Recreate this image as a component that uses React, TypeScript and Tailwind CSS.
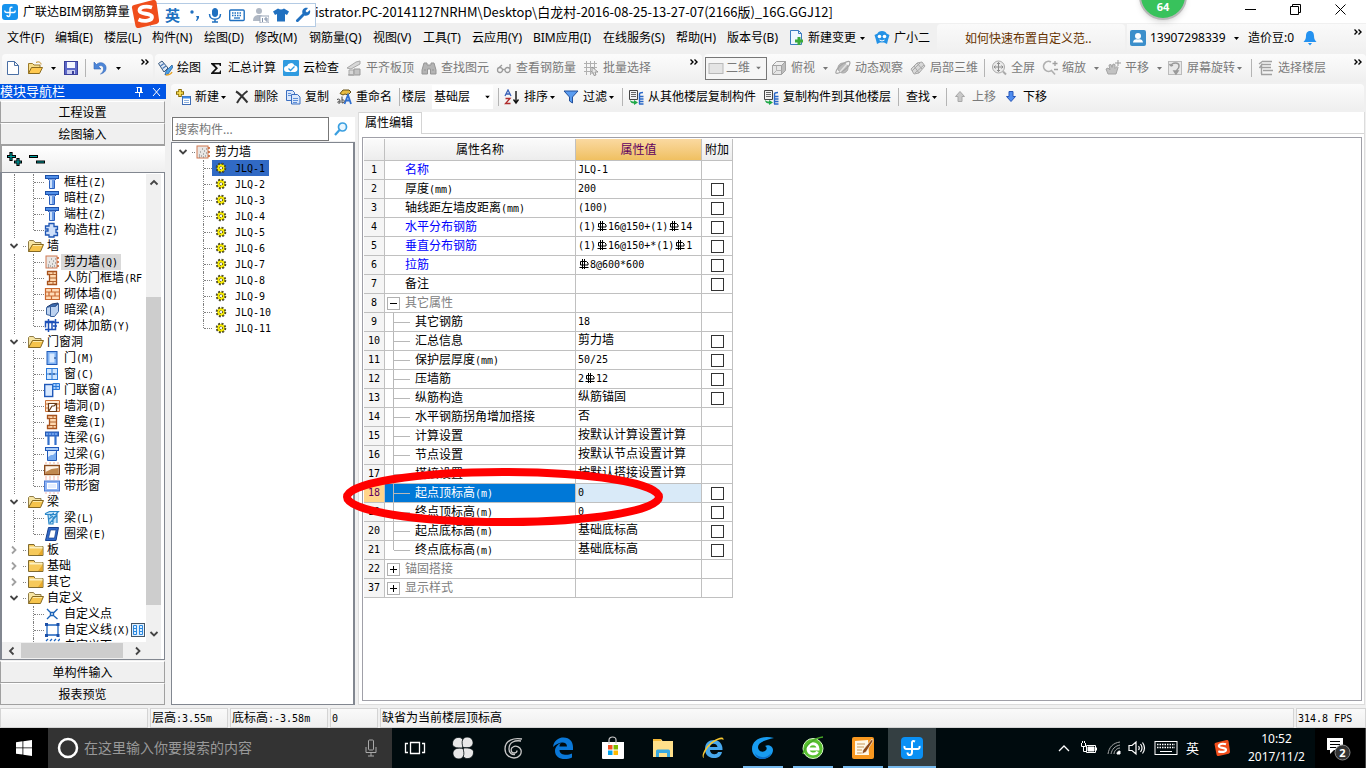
import { Fragment } from 'react'
import type { ReactNode } from 'react'
import clsx from 'clsx'

// ─── icons ──────────────────────────────────────────────────────────────────

const PILLAR = (
  <>
    <rect x="1.5" y="1.5" width="13" height="3" fill="#4f8fe8" stroke="#1c4fa8" />
    <path d="M4 5h8l-1.500 1.500V14.500h-5V6.500z" fill="#cfe2fb" stroke="#2a5fbd" />
    <path d="M9 6v8" stroke="#6a9be6" strokeWidth="2" />
  </>
)
const NICHE = (
  <>
    <path d="M3.500 1.500h9v13h-9v-3h2v-7h-2z" fill="#ffd9b0" stroke="#a8521c" strokeWidth="1.300" />
    <path d="M6 4.500h6M6 8h6M6 11.500h6M9 1.500v3M9 11.500v3" stroke="#b0622c" />
  </>
)
const CONCRETE = (
  <>
    <rect x="2" y="2" width="11" height="12" fill="#e9e6e4" stroke="#d07850" />
    <path d="M13 4h2M13 8h2M13 12h2" stroke="#c05a28" strokeWidth="1.500" />
    <path d="M4 11h1M6 12h1M8 10h1M10 12h1M5 8h1M9 7h1M7 5h1M11 9h1M4 13h1M8 13h1M11 5h1" stroke="#777" />
  </>
)

const ICONS: Record<string, ReactNode> = {
  page: <path d="M2.500 1.500h7l4 4v9h-11zM9.500 1.500v4h4" fill="#fff" stroke="#4a6fa5" />,
  open: (
    <>
      <path d="M1.500 13.500v-10h4l1.500 1.500h6v3" fill="#f7dd8a" stroke="#9c7a28" />
      <path d="M1.500 13.500l3-6h11l-3 6z" fill="#ffc94f" stroke="#8a6a1e" />
      <path d="M9 2.500c3-1.500 5 0 5 2" fill="none" stroke="#c08a20" />
    </>
  ),
  save: (
    <>
      <rect x="1.500" y="1.500" width="13" height="13" fill="#5c68c8" stroke="#3a3f9a" />
      <rect x="4" y="2" width="8" height="6" fill="#f4f6ff" />
      <rect x="4" y="10" width="8" height="4" fill="#c9cdf0" />
      <rect x="9" y="11" width="2" height="3" fill="#3a3f9a" />
    </>
  ),
  undo: (
    <path d="M2 2v7h7L6.500 6.500C9 4.500 12 6 11.500 9.500c-.2 2-1.500 3.500-3 4.500 4-1 6-3.500 5.500-7C13.500 3 8 1 4.500 4.500z" fill="#4d86d8" stroke="#2f64b8" strokeWidth=".6" />
  ),
  paint: (
    <>
      <path d="M1.500 3.500L5 1l6 7-4 4z" fill="#dfe9f5" stroke="#38587e" />
      <path d="M3.500 6L7 3.500M5.500 8.500L9 6" stroke="#4a7ab8" strokeWidth="1.300" />
      <path d="M15 5l-6 6-1 4 3-1 5-7z" fill="#4aa0e8" stroke="#1c5590" strokeWidth=".7" />
      <path d="M9 15c2 0 5-1 6-3" stroke="#e8a020" strokeWidth="1.500" fill="none" />
    </>
  ),
  sigma: <path d="M3 3h10v3h-1.200l-.6-1.400H6.500L10 8.200 6 12.200h5.400l.7-1.700H13V14H3v-1l4.500-4.800L3 4z" fill="#111" />,
  cloud: (
    <>
      <rect width="16" height="16" rx="1" fill="#2f9be0" />
      <path d="M4 12a3 3 0 010-6 4 4 0 017.500-.5A3.300 3.300 0 0112 12z" fill="#fff" />
      <path d="M5.500 8.500l2 2 4-4" fill="none" stroke="#2f9be0" strokeWidth="1.300" />
    </>
  ),
  align: (
    <>
      <path d="M1 8l9-6 4-1v3l-9 5zM3 10h5v5H3z" fill="#d8d8d8" stroke="#a8a8a8" />
      <path d="M8 14V9h6v6H2" fill="#c4c4c4" stroke="#999" />
    </>
  ),
  binoculars: (
    <path d="M3 3h3v2h4V3h3l2 7v4H9.500V9h-3v5H1v-4zM3 10h2M11 10h2" fill="#b4b4b4" stroke="#959595" />
  ),
  glasses: (
    <path d="M1.500 10a2.500 2.500 0 105 0 2.500 2.500 0 10-5 0zM9 10a2.500 2.500 0 105 0 2.500 2.500 0 10-5 0zM6.500 9.500H9M2 8.500L6 5M14 9V4" fill="none" stroke="#9a9a9a" strokeWidth="1.300" />
  ),
  batch: (
    <>
      <path d="M1 3.500h13M1 7.500h13M1 11.500h8M3.500 1v14M7.500 1v14M11.500 1v8" stroke="#b0b0b0" fill="none" />
      <path d="M9 7l6 5h-3l1 3-2 .5-1-3-1 1z" fill="#e8e8e8" stroke="#888" strokeWidth=".8" />
    </>
  ),
  plane: <rect x="1" y="3.500" width="14" height="10" fill="#e4e4e4" stroke="#b8b8b8" />,
  cube: (
    <>
      <path d="M1.500 5.500l4-4h9l-4 4z" fill="#efefef" stroke="#a2a2a2" />
      <path d="M10.500 5.500l4-4v9l-4 4z" fill="#bdbdbd" stroke="#a2a2a2" />
      <path d="M1.500 5.500h9v9h-9z" fill="#e6e6e6" stroke="#a2a2a2" />
      <path d="M5.500 5.500v5h5M5.500 10.500l-4 4" stroke="#b4b4b4" />
    </>
  ),
  orbit: (
    <>
      <circle cx="8" cy="8" r="5" fill="#bcbcbc" stroke="#a8a8a8" />
      <path d="M1 13c-1-2 3-7 8-10 4-2.400 6-2 6 0 0 3-5 7-9 9-2.500 1.200-4.400 1.600-5 1z" fill="none" stroke="#a4a4a4" strokeWidth="1.200" />
      <path d="M5 12l7-8" stroke="#e2e2e2" strokeWidth="1.500" />
    </>
  ),
  local3d: (
    <path d="M1 9l6-6 5-1 3 4-6 7-5 1zM4 6l5 7M7 3l5 6M2 11l8-8M5 13l9-8" fill="#d8d8d8" stroke="#a8a8a8" />
  ),
  full: (
    <>
      <circle cx="7.500" cy="7" r="6" fill="#eaeaea" stroke="#aaa" />
      <path d="M7.500 2.500v9M3 7h9M6 4l1.500-1.500L9 4M6 10l1.500 1.500L9 10M4.500 5.500L3 7l1.500 1.500M10.500 5.500L12 7l-1.500 1.500" fill="none" stroke="#8c8c8c" />
      <path d="M12 11.500l3 3" stroke="#aaa" strokeWidth="2" />
    </>
  ),
  zoom: (
    <>
      <path d="M9 2a5 5 0 101 8M9 10l4 4.500" fill="none" stroke="#b0b0b0" strokeWidth="1.700" />
      <path d="M13 1v5M10.500 3.500h5M12 9.500h4" stroke="#a0a0a0" strokeWidth="1.300" />
    </>
  ),
  hand: (
    <>
      <path d="M3 14l-2-5 2-1 2 2-1-5 2-.5 1 3 1-3.500 2 .5v4l2-2 1 1-2 6.500z" fill="#c2c2c2" stroke="#a4a4a4" />
      <path d="M13 0v6M10 3h6" stroke="#999" />
    </>
  ),
  rotate: (
    <>
      <rect x="1.500" y="1.500" width="13" height="13" fill="#e8e8e8" stroke="#bbb" />
      <path d="M4 6c1-4 8-4 8 0 0 4-3 3-3 6M9 14l-2-3h4zM4 6l-1.500-2M4 6l2-1" fill="none" stroke="#999" strokeWidth="1.500" />
    </>
  ),
  floors: (
    <path d="M1 4l4-3M5 1.500h9M3 4.500h10M3 7.500h10M5 10.500h10M3 14.500h11M1.500 8l2-3v9" fill="none" stroke="#a0a0a0" strokeWidth="1.400" />
  ),
  create: (
    <>
      <path d="M5 0v8M1 4h8" stroke="#8a6d00" strokeWidth="3.500" />
      <path d="M5 1v6M2 4h6" stroke="#ffe45a" strokeWidth="1.700" />
      <rect x="7.500" y="7.500" width="8" height="8" fill="#fff" stroke="#3f6db5" />
      <path d="M8 8.500h7" stroke="#3f8be8" strokeWidth="2" />
      <path d="M9 11.500h5M9 13.500h5" stroke="#8db0dd" />
    </>
  ),
  remove: <path d="M2 2.500c4 2 8 7 11.500 11M13.500 2C9 5 6 9 3 14" stroke="#333" strokeWidth="2" fill="none" />,
  copy: (
    <>
      <path d="M1.500 1.500h6l2 2v8h-8z" fill="#dbe8fb" stroke="#3b6fc0" />
      <path d="M6.500 5.500h6l2.500 2.500v7h-8.500z" fill="#dbe8fb" stroke="#3b6fc0" />
      <path d="M8 9.500h5M8 11.500h5M8 13.500h4M3 4.500h3M3 6.500h3" stroke="#5e8fd8" />
    </>
  ),
  rename: (
    <>
      <path d="M4 4.500l3-3.500h6l2 2-3 3-3-1-2 1z" fill="#e8bc40" stroke="#665014" />
      <path d="M8.500 15l3.500-9 3 9M10 11.500h4" stroke="#2f6fd0" strokeWidth="1.800" fill="none" />
      <path d="M1 10.500c2-1 3 0 3 1V14c-3 .6-3-2 0-2M6 7.500V14c3 0 3-4 0-3" stroke="#444" fill="none" />
    </>
  ),
  sort: (
    <>
      <path d="M1 7l3-6 3 6M2 5h4" stroke="#3a62b8" strokeWidth="1.300" fill="none" />
      <path d="M1.500 9.500H6l-4.500 5H6.500" stroke="#b02c2c" strokeWidth="1.300" fill="none" />
      <path d="M12 2v11M9.500 10.500L12 14l2.500-3.500" stroke="#111" strokeWidth="1.400" fill="none" />
    </>
  ),
  filter: <path d="M1 2h14l-5.500 6v6L6.500 12V8z" fill="#5a9cf0" stroke="#22509c" />,
  floorcopy: (
    <>
      <path d="M1.500 1.500h8v9h-8z" fill="#f2f2f2" stroke="#444" />
      <path d="M3 3.500h5M3 5.500h5M3 7.500h5" stroke="#666" />
      <path d="M11.500 5c0-1 1-1.500 3.500-1.500M11.500 7.500h4M11.500 10h4M11.500 12.500h4M11 15h4.500M11.500 5v10" stroke="#2a68c8" strokeWidth="1.400" />
      <path d="M2 11c1 1.500 3 1.500 4 1.500V11l4 2.500-4 2.500v-1.500c-2 0-4-1-4-3.500z" fill="#20a848" />
    </>
  ),
  up: <path d="M8 2.500l4.500 5h-2.500v5H6v-5H3.500z" fill="#c8c8c8" stroke="#a8a8a8" />,
  down: <path d="M8 12.500l-4.500-5H6v-5h4v5h2.500z" fill="#4f8df0" stroke="#2a58b8" />,
  change: (
    <>
      <path d="M2.500.5h8l3 3v11h-11z" fill="#f0f7ff" stroke="#3c7cc0" />
      <path d="M10.500.5v3h3" fill="none" stroke="#3c7cc0" />
      <path d="M9.500 7h3v2.500H15v3h-2.500V15h-3v-2.500H7v-3h2.500z" fill="#3cab3c" />
    </>
  ),
  robot: (
    <>
      <path d="M8 1c2.500 0 4 1 4.500 2.500L15.500 5l-1.500 5-1 4-3-1.500H6L3 14l-1-4L.5 5l3-1.500C4 2 5.500 1 8 1z" fill="#2492e6" />
      <circle cx="5.500" cy="6.500" r="1.800" fill="#fff" />
      <circle cx="10.500" cy="6.500" r="1.800" fill="#fff" />
      <path d="M5.500 10q2.500 2 5 0" stroke="#fff" fill="none" />
    </>
  ),
  user: (
    <>
      <rect width="16" height="16" rx="2" fill="#3c8fcb" />
      <circle cx="8" cy="6" r="3" fill="#fff" />
      <path d="M3 12.500c0-3 3-4 5-3 2-1 5 0 5 3z" fill="#fff" />
    </>
  ),
  bell: <path d="M8 1c3 0 4 2.500 4 5 0 3 1 4 2.500 6h-13C3 10 4 9 4 6c0-2.500 1-5 4-5zM6 13h4l-2 2.500z" fill="#2492f0" />,
  search: (
    <>
      <circle cx="9.500" cy="6" r="4" fill="#e8f6ff" stroke="#3a9fe0" strokeWidth="1.700" />
      <path d="M6.500 9L2 14" stroke="#3a9fe0" strokeWidth="2.200" />
    </>
  ),
  pillar: PILLAR,
  column: (
    <path d="M5 1.500h5v3h3.500v3H12v3h1.500v3H10v1.500H5v-2H1.500v-4H4v-2H1.500v-3H5z" fill="#cfe0fa" stroke="#1f56b4" strokeWidth="1.300" />
  ),
  folderOpen: (
    <>
      <path d="M.5 13.500v-10l1-1h4l1.500 2h6v3" fill="#f8e6a4" stroke="#8f7c48" />
      <path d="M.5 13.500l4-7h11l-3 7z" fill="#f6c44c" stroke="#856822" />
      <path d="M5 7.500h9" stroke="#fdeaa8" />
    </>
  ),
  folder: (
    <>
      <path d="M.5 13.500v-11h5.500l1 2h8v9z" fill="#f6c95a" stroke="#7f6a30" />
      <path d="M1.500 5.500h13" stroke="#fdf0c0" strokeWidth="2" />
      <path d="M10 13l4.500-6v6z" fill="#e8a828" />
    </>
  ),
  concrete: CONCRETE,
  niche: NICHE,
  brick: (
    <path d="M1.500 2.500h14v11h-14zM1.500 6h14M1.500 10h14M7.500 2.500V6M5 6v4M11 6v4M7.500 10v3.500" fill="#ffdcb8" stroke="#c86830" strokeWidth="1.200" />
  ),
  darkbeam: (
    <>
      <path d="M3 5l5-3 6-1-3 4z" fill="#3c6cb0" stroke="#203c70" />
      <path d="M2.500 5.500l4-1v9l-4-1zM6.500 4.500h5l3-3v8l-4 5h-4z" fill="#bcd2f0" stroke="#38609c" />
    </>
  ),
  rebar: (
    <path d="M4.500 1v13M11.500 1v9M1 4.500h14M1 11.500h10M4.500 4.500h7v7h-7zM8 5v6M1.500 9.500v-6h9M13 8H9" fill="none" stroke="#1c50b8" strokeWidth="1.500" />
  ),
  door: (
    <>
      <rect x="3" y="1.500" width="10" height="13" fill="#7fb2f4" stroke="#1f5ab8" />
      <rect x="5.500" y="3.500" width="5" height="9" fill="#d8e9ff" />
      <path d="M10 8h2" stroke="#123c80" />
    </>
  ),
  window: (
    <>
      <rect x="2.500" y="2.500" width="11" height="11" fill="#cfe6ff" stroke="#2a78d8" />
      <path d="M8 2v12M3 8h10" stroke="#2a78d8" />
      <path d="M6 7v2M10 7v2" stroke="#123c80" />
    </>
  ),
  doorwin: (
    <>
      <rect x=".7" y="2.500" width="8" height="12" fill="#d8e9ff" stroke="#2058b8" strokeWidth="1.400" />
      <path d="M9 1.500h6.500v6H9zM12 1.500v6M9 4.500h6" fill="#a8d0ff" stroke="#2a78d8" />
    </>
  ),
  wallhole: (
    <>
      <path d="M1.500 2.500h14v11h-14zM1.500 6h14M1.500 10h14" fill="#ffe8d0" stroke="#c87038" />
      <path d="M4.500 5.500h8v8h-8zM5 13l3-5h2l2-2" fill="#fff" stroke="#6a3c18" strokeWidth="1.200" />
    </>
  ),
  linkbeam: (
    <>
      <rect x="1.500" y="2" width="13" height="4" fill="#3c78d8" stroke="#2458b0" />
      <path d="M2 4h12" stroke="#9cc4f8" strokeDasharray="2 1" />
      <path d="M4.500 6v9M11.500 6v9" stroke="#3370cc" strokeWidth="2.200" />
    </>
  ),
  lintel: (
    <>
      <rect x="1.500" y="1.500" width="13" height="3" fill="#a8ccf8" stroke="#2058b8" />
      <path d="M3.500 4.500h9v10h-9z" fill="#e2efff" stroke="#2058b8" />
      <path d="M4 11l3-2h2l3-3v8H4z" fill="#78acf0" />
    </>
  ),
  striphole: (
    <>
      <rect x=".7" y="3.500" width="14.600" height="9" fill="#fff4e8" stroke="#8a4a1c" strokeWidth="1.400" />
      <path d="M1.500 10l6-3 7-1v6h-13z" fill="#c08850" />
      <path d="M1 1h2M5 1h2M9 1h2M13 1h2M1 15h2M5 15h2M9 15h2M13 15h2" stroke="#f4b098" />
    </>
  ),
  stripwin: (
    <>
      <rect x=".5" y="3" width="15" height="10" fill="#8fb4f4" stroke="#4a78d0" />
      <rect x="3.500" y="5.500" width="9" height="5" fill="#e4eeff" stroke="#fff" />
      <path d="M1 1h2M5 1h2M9 1h2M13 1h2M1 15h2M5 15h2M9 15h2M13 15h2" stroke="#f4b4b4" />
    </>
  ),
  beam: <path d="M1.500 3.500l4-2h9l-3 3h-10zM4 5l1 9h4V8l4-3V2M6 6l4-3M5 9l4-3M6 13l7-8v8" fill="#bce0f8" stroke="#2c88c8" strokeWidth="1.200" />,
  ring: (
    <>
      <path d="M4.500 1.500h10l-2.500 13H1.500z" fill="#2f68c8" stroke="#173f8c" />
      <path d="M6.500 4h5.500l-1.500 8H4.500z" fill="#fff" stroke="#173f8c" strokeWidth=".7" />
    </>
  ),
  point: <path d="M3 3l3.500 3.500M10 10l3.500 3M13.500 3L10 6.500M6.500 9.500L3 13M6.500 6.500h3v3h-3z" fill="none" stroke="#1c64b8" strokeWidth="1.400" />,
  line: (
    <>
      <path d="M3 3h11v10H3z" fill="none" stroke="#1c64c0" strokeWidth="1.300" />
      <path d="M1 1h3v3H1zM12.500 1h3v3h-3zM1 12h3v3H1zM12.500 12h3v3h-3z" fill="#1c50a8" />
    </>
  ),
  face: <path d="M2 3l2-2M6 3l2-2M10 3l2-2M14 3l2-2M2 6h12v8H2z" fill="none" stroke="#1c64c0" strokeWidth="1.300" />,
  gear: (
    <>
      <circle cx="8" cy="8" r="4.500" fill="#f8ec00" />
      <circle cx="8" cy="8" r="5" fill="none" stroke="#222" strokeWidth="2" strokeDasharray="2.200 1.730" />
      <circle cx="8" cy="8" r="5" fill="none" stroke="#f0e000" strokeWidth=".8" strokeDasharray="1 2.930" strokeDashoffset="-.6" />
      <circle cx="8" cy="8" r="1.700" fill="#fff" stroke="#111" strokeDasharray="1.300 1.370" />
    </>
  ),
}

function Icon({ name, className = 'size-4' }: { name: string; className?: string }) {
  return (
    <svg viewBox="0 0 16 16" fill="none" className={clsx('shrink-0', className)} aria-hidden="true">
      {ICONS[name]}
    </svg>
  )
}

function Caret({ muted }: { muted?: boolean }) {
  return (
    <svg viewBox="0 0 5 3" className="w-[5px] h-[3px] shrink-0" aria-hidden="true">
      <path d="M0 0h5L2.500 3z" fill={muted ? '#777' : '#000'} />
    </svg>
  )
}

function More() {
  return (
    <button aria-label="更多" className="ml-auto mr-1 mb-3">
      <svg viewBox="0 0 8 6" className="w-2 h-1.5" fill="none" stroke="#000" strokeWidth="1.400" aria-hidden="true">
        <path d="M.5.5L3 3 .5 5.500M4.500.5L7 3 4.500 5.500" />
      </svg>
    </button>
  )
}

function SogouLogo({ className }: { className: string }) {
  return (
    <svg viewBox="0 0 28 28" className={className} aria-hidden="true">
      <path d="M3 5L22 0q3-.5 3.500 2L28 20q.5 3-2.500 4L8 28q-3 .5-3.500-2L1 8q-.5-2.500 2-3z" fill="#f04e1c" />
      <path d="M21 7.500C15 5.500 8.500 7 8.500 10.500c0 4.500 12.500 2 12.500 6.500 0 4-8 5-13.500 2.500" fill="none" stroke="#fff" strokeWidth="3.800" />
    </svg>
  )
}

// deformed-bar grade mark used in reinforcement notation
function BarMark() {
  return (
    <svg viewBox="0 0 12 12" className="inline-block size-3 align-[-2px]" fill="none" stroke="currentColor" role="img" aria-label="三级钢">
      <path d="M6.500 1v10M4.500 1v10M1.500 9.500h9M2.500 3.500h6l1.500 1.500v2H2.500z" />
    </svg>
  )
}

// half-width runs are set in a 6px cell beside 12px ideographs
function Cell({ text }: { text: string }) {
  return (
    <>
      {text.split(/([\x20-\x7e]+|⌽)/).map((run, i) => {
        if (run === '⌽') return <BarMark key={i} />
        if (i % 2 === 0) return <Fragment key={i}>{run}</Fragment>
        return (
          <span key={i} className="font-['DejaVu_Sans_Mono',monospace] text-[10px] leading-none whitespace-pre">
            {run}
          </span>
        )
      })}
    </>
  )
}

// ─── title and menu ─────────────────────────────────────────────────────────

function TitleBar() {
  return (
    <header className="relative flex h-[23px] items-center bg-white pl-0.5">
      <svg viewBox="0 0 16 16" className="size-4 shrink-0" fill="none" aria-hidden="true">
        <rect width="16" height="16" rx="3" fill="#1693ee" />
        <path d="M10.500 3.500Q8 2.500 8 5v5.500c0 2.500-3 2.500-3 .5M3 6.500Q2.500 8.500 5 8.500h7q1.500 0 1-2" stroke="#fff" strokeWidth="1.400" />
      </svg>
      <h1 className="ml-[5px] flex items-center whitespace-nowrap text-[12px]">
        <span className="w-[292px]">广联达BIM钢筋算量</span>
        <span className="font-['Noto_Sans_CJK_SC',sans-serif] text-[13px]">
          istrator.PC-20141127NRHM\Desktop\白龙村-2016-08-25-13-27-07(2166版)_16G.GGJ12]
        </span>
      </h1>

      <div className="absolute left-[150px] top-[3px] z-10 flex h-6 w-[166px] items-center border border-[#b4cbe4] bg-white pl-3.5 text-[#2070c0]">
        <span className="w-6 text-[15px] font-bold leading-5">英</span>
        <svg viewBox="0 0 12 16" className="h-4 w-3" aria-hidden="true">
          <circle cx="3" cy="5" r="1.700" fill="#2070c0" />
          <path d="M7 9h3v2l-2 3H7l1-3z" fill="#2070c0" />
        </svg>
        <svg viewBox="0 0 16 16" className="ml-1.5 size-4" fill="none" stroke="#2070c0" aria-hidden="true">
          <rect x="5.500" y="1.500" width="5" height="8" rx="2.500" fill="#2070c0" />
          <path d="M2.500 7c0 7 11 7 11 0M8 12v3M5 15h6" strokeWidth="1.500" />
        </svg>
        <svg viewBox="0 0 16 16" className="ml-1.5 size-4" fill="none" stroke="#2070c0" aria-hidden="true">
          <rect x=".7" y="3" width="14.500" height="10.500" rx="1" strokeWidth="1.400" />
          <path d="M3 6h10M3 8.500h10" strokeWidth="1.500" strokeDasharray="1.500 1" />
          <path d="M5 11h6" strokeWidth="1.300" />
        </svg>
        <svg viewBox="0 0 16 16" className="ml-2 size-4" aria-hidden="true">
          <circle cx="6" cy="4" r="3" fill="#b0b8c4" />
          <path d="M0 14c0-5 3-6 6-6s4 1 5 2v4z" fill="#b0b8c4" />
          <rect x="7" y="9" width="9" height="7" fill="#fff" stroke="#9aa6b8" />
          <path d="M9.500 11v4M12 11h2v4M12 11v2h2" stroke="#8090a8" fill="none" />
        </svg>
        <svg viewBox="0 0 16 16" className="ml-1 size-4" aria-hidden="true">
          <path d="M5 1.500q3 2 6 0l5 3-2 3.500-2-1v7.500H4V7L2 8 0 4.500z" fill="#2070c0" />
        </svg>
        <svg viewBox="0 0 16 16" className="ml-1.5 size-4" aria-hidden="true">
          <path d="M15 3l-3 2.500L10.500 4 13 1C9 0 6.500 3 7.500 6.500L1 13q-.5 2 2 2l6.500-6.500C13 9.500 16 7 15 3z" fill="#2070c0" />
        </svg>
      </div>
      <SogouLogo className="absolute left-[131px] top-0 z-10 size-7" />

      <div className="absolute right-[179px] top-[-28px] z-10 flex size-12 items-end justify-center rounded-full border-2 border-[#b8b8b8] bg-[#38c25c] pb-[3px] text-[11px] font-bold leading-4 text-white shadow-md">
        64
      </div>

      <div className="ml-auto flex h-full items-center gap-[34px] pb-1 pr-5">
        <button aria-label="最小化" className="h-px w-[11px] bg-black" />
        <button aria-label="还原">
          <svg viewBox="0 0 11 11" className="size-[11px]" fill="none" stroke="#000" aria-hidden="true">
            <path d="M.5 2.500h8v8h-8zM2.500 2.500v-2h8v8h-2" />
          </svg>
        </button>
        <button aria-label="关闭">
          <svg viewBox="0 0 11 11" className="size-[11px]" fill="none" stroke="#000" aria-hidden="true">
            <path d="M.5.5l10 10M10.500.5l-10 10" />
          </svg>
        </button>
      </div>
    </header>
  )
}

const MENUS = [
  { label: '文件(F)', w: 'w-12' },
  { label: '编辑(E)', w: 'w-[49px]' },
  { label: '楼层(L)', w: 'w-12' },
  { label: '构件(N)', w: 'w-[52px]' },
  { label: '绘图(D)', w: 'w-[51px]' },
  { label: '修改(M)', w: 'w-[54px]' },
  { label: '钢筋量(Q)', w: 'w-16' },
  { label: '视图(V)', w: 'w-[50px]' },
  { label: '工具(T)', w: 'w-[49px]' },
  { label: '云应用(Y)', w: 'w-[61px]' },
  { label: 'BIM应用(I)', w: 'w-[70px]' },
  { label: '在线服务(S)', w: 'w-[73px]' },
  { label: '帮助(H)', w: 'w-[51px]' },
  { label: '版本号(B)', w: 'w-[61px]' },
]

function MenuBar() {
  return (
    <nav className="flex h-[30px] items-center pl-[7px]">
      {MENUS.map((m) => (
        <button key={m.label} className={clsx('shrink-0 text-left', m.w)}>
          {m.label}
        </button>
      ))}
      <button className="flex w-[86px] shrink-0 items-center gap-1">
        <Icon name="change" />
        新建变更
        <Caret />
      </button>
      <button className="flex w-[63px] shrink-0 items-center gap-1">
        <Icon name="robot" />
        广小二
      </button>
      <div className="flex h-[29px] w-[188px] shrink-0 items-center rounded-sm bg-linear-to-b from-[#fafafa] to-[#f0f0f0] pl-7">
        <a href="#tip" className="font-['Noto_Sans_CJK_SC',sans-serif] text-[#663300]">如何快速布置自定义范..</a>
      </div>
      <div className="ml-0.5 flex h-[29px] min-w-0 flex-1 items-center bg-linear-to-b from-[#fafafa] to-[#f0f0f0] pl-[3px]">
        <button className="flex w-[118px] shrink-0 items-center gap-1">
          <Icon name="user" />
          13907298339
          <span className="ml-1"><Caret /></span>
        </button>
        <span className="w-[54px] shrink-0">造价豆:0</span>
        <Icon name="bell" />
        <More />
      </div>
    </nav>
  )
}

// ─── toolbars ───────────────────────────────────────────────────────────────

function Tool({
  icon,
  label,
  w,
  muted,
  caret,
}: {
  icon?: string
  label?: string
  w: string
  muted?: boolean
  caret?: 'near' | 'far'
}) {
  return (
    <button
      aria-label={label ? undefined : icon}
      className={clsx('flex shrink-0 items-center gap-1', w, muted ? 'text-[#7a7a7a]' : 'text-black')}
    >
      {icon && <Icon name={icon} />}
      {label}
      {caret && (
        <span className={caret === 'far' ? 'ml-1' : '-ml-0.5'}>
          <Caret muted={muted} />
        </span>
      )}
    </button>
  )
}

function Sep({ className = 'mr-1.5' }: { className?: string }) {
  return <span className={clsx('h-[18px] w-px shrink-0 bg-[#b4b4b4]', className)} />
}

const BAR = 'flex items-center rounded-sm bg-linear-to-b from-[#fcfcfc] to-[#efefef]'

function MainToolbar() {
  return (
    <div className="flex h-[29px] shrink-0 gap-0.5 whitespace-nowrap pl-0.5 pt-px">
      <div className={clsx(BAR, 'w-[151px] shrink-0 pl-[3px]')}>
        <Tool icon="page" w="w-[22px]" />
        <Tool icon="open" w="w-9" caret="far" />
        <Tool icon="save" w="w-[22px]" />
        <Sep className="mr-1.5" />
        <Tool icon="undo" w="w-8" caret="far" />
        <More />
      </div>
      <div className={clsx(BAR, 'w-[547px] shrink-0 pl-0.5')}>
        <Tool icon="paint" label="绘图" w="w-[51px]" />
        <Tool icon="sigma" label="汇总计算" w="w-[75px]" />
        <Tool icon="cloud" label="云检查" w="w-[63px]" />
        <Tool icon="align" label="平齐板顶" w="w-[75px]" muted />
        <Tool icon="binoculars" label="查找图元" w="w-[75px]" muted />
        <Tool icon="glasses" label="查看钢筋量" w="w-[87px]" muted />
        <Tool icon="batch" label="批量选择" w="w-[75px]" muted />
        <More />
      </div>
      <div className={clsx(BAR, 'min-w-0 flex-1 pl-px')}>
        <label className="relative mr-1 flex h-[23px] w-[62px] shrink-0 items-center border border-[#777] bg-[#f6f6f6] pl-0.5">
          <Icon name="plane" />
          <select aria-label="视图模式" className="w-full appearance-none bg-transparent pl-0.5 text-[#7a7a7a]" defaultValue="2d">
            <option value="2d">二维</option>
          </select>
          <span className="pointer-events-none absolute right-[5px] top-1/2 flex -translate-y-1/2"><Caret muted /></span>
        </label>
        <Tool icon="cube" label="俯视" w="w-16" muted caret="far" />
        <Tool icon="orbit" label="动态观察" w="w-[75px]" muted />
        <Tool icon="local3d" label="局部三维" w="w-[74px]" muted />
        <Sep />
        <Tool icon="full" label="全屏" w="w-[51px]" muted />
        <Tool icon="zoom" label="缩放" w="w-[63px]" muted caret="far" />
        <Tool icon="hand" label="平移" w="w-[62px]" muted caret="far" />
        <Tool icon="rotate" label="屏幕旋转" w="w-[84px]" muted caret="near" />
        <Sep />
        <Tool icon="floors" label="选择楼层" w="w-[70px]" muted />
        <More />
      </div>
    </div>
  )
}

function PartToolbar() {
  return (
    <div className={clsx(BAR, 'mr-0.5 h-[26px] shrink-0 whitespace-nowrap pl-1')}>
      <Tool icon="create" label="新建" w="w-[59px]" caret="near" />
      <Tool icon="remove" label="删除" w="w-[51px]" />
      <Tool icon="copy" label="复制" w="w-[51px]" />
      <Tool icon="rename" label="重命名" w="w-[63px]" />
      <Sep className="mr-0.5" />
      <label htmlFor="floor" className="w-[30px] shrink-0">楼层</label>
      <div className="relative mr-[5px] h-6 w-[61px] shrink-0 bg-white">
        <select id="floor" className="h-6 w-full appearance-none pl-0.5" defaultValue="base">
          <option value="base">基础层</option>
        </select>
        <span className="pointer-events-none absolute right-[3px] top-1/2 flex -translate-y-1/2"><Caret /></span>
      </div>
      <Sep className="mr-[5px]" />
      <Tool icon="sort" label="排序" w="w-[59px]" caret="near" />
      <Tool icon="filter" label="过滤" w="w-[59px]" caret="near" />
      <Sep className="mr-[5px]" />
      <Tool icon="floorcopy" label="从其他楼层复制构件" w="w-[135px]" />
      <Tool icon="floorcopy" label="复制构件到其他楼层" w="w-[135px]" />
      <Sep className="mr-[7px]" />
      <Tool label="查找" w="w-10" caret="near" />
      <Sep className="mr-[5px]" />
      <Tool icon="up" label="上移" w="w-[51px]" muted />
      <Tool icon="down" label="下移" w="w-[51px]" />
    </div>
  )
}

// ─── module navigation ──────────────────────────────────────────────────────

type Leaf = [icon: string, label: string]

const GROUPS: { label?: string; open: boolean; items: Leaf[] }[] = [
  {
    open: true,
    items: [
      ['pillar', '框柱(Z)'],
      ['pillar', '暗柱(Z)'],
      ['pillar', '端柱(Z)'],
      ['column', '构造柱(Z)'],
    ],
  },
  {
    label: '墙',
    open: true,
    items: [
      ['concrete', '剪力墙(Q)'],
      ['niche', '人防门框墙(RF'],
      ['brick', '砌体墙(Q)'],
      ['darkbeam', '暗梁(A)'],
      ['rebar', '砌体加筋(Y)'],
    ],
  },
  {
    label: '门窗洞',
    open: true,
    items: [
      ['door', '门(M)'],
      ['window', '窗(C)'],
      ['doorwin', '门联窗(A)'],
      ['wallhole', '墙洞(D)'],
      ['niche', '壁龛(I)'],
      ['linkbeam', '连梁(G)'],
      ['lintel', '过梁(G)'],
      ['striphole', '带形洞'],
      ['stripwin', '带形窗'],
    ],
  },
  {
    label: '梁',
    open: true,
    items: [
      ['beam', '梁(L)'],
      ['ring', '圈梁(E)'],
    ],
  },
  { label: '板', open: false, items: [] },
  { label: '基础', open: false, items: [] },
  { label: '其它', open: false, items: [] },
  {
    label: '自定义',
    open: true,
    items: [
      ['point', '自定义点'],
      ['line', '自定义线(X)'],
      ['face', '自定义面'],
    ],
  },
]

function Chevron({ dir, muted }: { dir: 'up' | 'down' | 'left' | 'right'; muted?: boolean }) {
  const d = {
    up: 'M1.500 6.500L5 3l3.500 3.500',
    down: 'M1.500 3L5 6.500 8.500 3',
    left: 'M6.500 1.500L3 5l3.500 3.500',
    right: 'M3 1.500L6.500 5 3 8.500',
  }[dir]
  return (
    <svg viewBox="0 0 10 10" className="size-2.5" fill="none" stroke={muted ? '#a0a0a0' : '#444'} strokeWidth="1.800" aria-hidden="true">
      <path d={d} />
    </svg>
  )
}

function NavButton({ children }: { children: ReactNode }) {
  return (
    <button className="h-[22px] w-full shrink-0 border border-b-[#a0a0a0] border-l-[#a0a0a0] border-r-[#a0a0a0] border-t-white bg-[#f0f0f0] pt-0.5 text-center">
      {children}
    </button>
  )
}

function ModuleTree() {
  return (
    <ul className="min-w-0 flex-1 overflow-hidden pl-px">
      {GROUPS.map((g, gi) => {
        const lastGroup = gi === GROUPS.length - 1
        return (
          <li key={g.label ?? 'top'}>
            {g.label && (
              <div className="flex h-4 items-center pl-1.5">
                <button aria-label={g.open ? '折叠' : '展开'} className="w-[14px]">
                  <Chevron dir={g.open ? 'down' : 'right'} muted={!g.open} />
                </button>
                <span className="mr-0.5 w-[3px] border-t border-dotted border-[#808080]" />
                <Icon name={g.open ? 'folderOpen' : 'folder'} />
                <button className="ml-[3px] leading-4">{g.label}</button>
              </div>
            )}
            <ul>
              {g.items.map(([icon, label], i) => {
                const last = i === g.items.length - 1 && !lastGroup
                const active = label === '剪力墙(Q)'
                return (
                  <li key={label} className="flex h-4 items-center">
                    <span className={clsx('h-4 w-3 shrink-0', !lastGroup && 'border-r border-dotted border-[#808080]')} />
                    <span className={clsx('w-[19px] shrink-0 self-start border-r border-dotted border-[#808080]', last ? 'h-2' : 'h-4')} />
                    <span className="w-2.5 shrink-0 border-t border-dotted border-[#808080]" />
                    <Icon name={icon} />
                    <button className={clsx('ml-px h-4 whitespace-nowrap px-[3px] leading-4', active && 'bg-[#d9d9d9]')}>
                      <Cell text={label} />
                    </button>
                    {icon === 'line' && (
                      <svg viewBox="0 0 14 14" className="-ml-0.5 size-3.5 shrink-0" fill="none" stroke="#2a88e0" aria-hidden="true">
                        <rect x=".5" y=".5" width="13" height="13" fill="#e0f0ff" stroke="#456" />
                        <path d="M2.500 2.500h3v9h-3zM8.500 2.500h3v9h-3zM3 5.500h2M3 8.500h2M9 5.500h2M9 8.500h2" />
                      </svg>
                    )}
                  </li>
                )
              })}
            </ul>
          </li>
        )
      })}
    </ul>
  )
}

function ModuleNav() {
  return (
    <aside className="flex w-[166px] shrink-0 flex-col">
      <div className="flex h-[15px] shrink-0 items-center bg-[#0055e5] pr-1 text-white">
        <h2 className="text-[13px] leading-[15px]">模块导航栏</h2>
        <button aria-label="固定" className="ml-auto">
          <svg viewBox="0 0 10 10" className="size-2.5" fill="none" stroke="#fff" aria-hidden="true">
            <path d="M2.500.5h5M3.500.5v5M6.500.5v5M7.500.5v5M1 5.500h8M5.500 5.500V10" />
          </svg>
        </button>
        <button aria-label="关闭" className="ml-2">
          <svg viewBox="0 0 10 10" className="size-2.5" fill="none" stroke="#fff" aria-hidden="true">
            <path d="M1 1l7 8M8 1L1 9" />
          </svg>
        </button>
      </div>
      <div className="mr-px mt-[2px] flex min-h-0 flex-1 flex-col">
        <NavButton>工程设置</NavButton>
        <NavButton>绘图输入</NavButton>
        <div className="flex h-[27px] shrink-0 items-center gap-1 border-l-2 border-t border-[#a0a0a0] bg-linear-to-b from-white to-[#efefef] pl-1">
          <button aria-label="展开全部">
            <svg viewBox="0 0 18 16" className="h-4 w-[18px]" aria-hidden="true">
              <path d="M5 1v9M1 5.500h9M12 7v8M8 11h8" stroke="#000" strokeWidth="3.200" />
              <path d="M5 2v7M2 5.500h7M12 8v6M9 11h6" stroke="#00a0a0" strokeWidth="1.200" />
            </svg>
          </button>
          <button aria-label="折叠全部">
            <svg viewBox="0 0 18 16" className="h-4 w-[18px]" aria-hidden="true">
              <path d="M1 5.500h9M8 11h9" stroke="#000" strokeWidth="3.200" />
              <path d="M2 5.500h7M9 11h7" stroke="#00a0a0" strokeWidth="1.200" />
            </svg>
          </button>
        </div>
        <div className="mb-px flex min-h-0 flex-1 flex-col border border-l-2 border-[#828790] bg-white pr-0.5 pt-px">
          <div className="flex min-h-0 flex-1 overflow-hidden">
            <ModuleTree />
            <div className="mr-px flex w-[15px] shrink-0 flex-col items-center bg-[#f0f0f0]">
              <button aria-label="向上滚动" className="flex h-[17px] items-center"><Chevron dir="up" /></button>
              <div className="h-[106px]" />
              <div className="w-full flex-1 bg-[#cdcdcd]" />
              <button aria-label="向下滚动" className="mt-5 flex h-[17px] items-center"><Chevron dir="down" /></button>
            </div>
          </div>
          <div className="mr-px flex h-[17px] shrink-0 items-center bg-[#f0f0f0]">
            <button aria-label="向左滚动" className="pl-[5px] pr-1"><Chevron dir="left" /></button>
            <div className="h-[15px] w-[102px] bg-[#cdcdcd]" />
            <button aria-label="向右滚动" className="ml-2.5"><Chevron dir="right" /></button>
          </div>
        </div>
        <NavButton>单构件输入</NavButton>
        <NavButton>报表预览</NavButton>
      </div>
    </aside>
  )
}

// ─── part list ──────────────────────────────────────────────────────────────

const PARTS = Array.from({ length: 11 }, (_, i) => `JLQ-${i + 1}`)

function PartList() {
  return (
    <section className="flex w-[184px] shrink-0 flex-col pt-[7px]">
      <div className="flex h-6 shrink-0 items-center bg-white pl-px">
        <input
          type="search"
          aria-label="搜索构件"
          placeholder="搜索构件..."
          className="h-6 w-[157px] border border-[#777] bg-white px-0.5 text-[12px] placeholder:text-[#777]"
        />
        <button aria-label="搜索" className="ml-1 flex size-4 items-center justify-center">
          <Icon name="search" />
        </button>
      </div>
      <div className="mt-px flex-1 border border-r-2 border-[#828790] bg-white pt-px">
        <div className="flex h-4 items-center pl-1.5">
          <button aria-label="折叠" className="w-[14px]"><Chevron dir="down" /></button>
          <span className="w-[3px] border-t border-dotted border-[#808080]" />
          <Icon name="concrete" />
          <button className="ml-1 leading-4">剪力墙</button>
        </div>
        <ul className="pl-[31px]">
          {PARTS.map((p, i) => (
            <li key={p} className="flex h-4 items-center">
              <span className={clsx('w-px self-start border-l border-dotted border-[#808080]', i === PARTS.length - 1 ? 'h-2' : 'h-4')} />
              <span className="w-2 border-t border-dotted border-[#808080]" />
              <button className={clsx('flex h-4 items-center pl-0.5 pr-1', i === 0 && 'bg-[#316ac5]')}>
                <Icon name="gear" className="size-3.5" />
                <span className="ml-[7px] leading-4">
                  <Cell text={p} />
                </span>
              </button>
            </li>
          ))}
        </ul>
      </div>
    </section>
  )
}

// ─── property grid ──────────────────────────────────────────────────────────

type Prop = {
  no: number
  name: string
  value?: string
  check?: boolean
  kind?: 'key' | 'child' | 'open' | 'closed'
}

const PROPS: Prop[] = [
  { no: 1, name: '名称', value: 'JLQ-1', kind: 'key' },
  { no: 2, name: '厚度(mm)', value: '200', check: true },
  { no: 3, name: '轴线距左墙皮距离(mm)', value: '(100)', check: true },
  { no: 4, name: '水平分布钢筋', value: '(1)⌽16@150+(1)⌽14', check: true, kind: 'key' },
  { no: 5, name: '垂直分布钢筋', value: '(1)⌽16@150+*(1)⌽1', check: true, kind: 'key' },
  { no: 6, name: '拉筋', value: '⌽8@600*600', check: true, kind: 'key' },
  { no: 7, name: '备注', check: true },
  { no: 8, name: '其它属性', kind: 'open' },
  { no: 9, name: '其它钢筋', value: '18', kind: 'child' },
  { no: 10, name: '汇总信息', value: '剪力墙', check: true, kind: 'child' },
  { no: 11, name: '保护层厚度(mm)', value: '50/25', check: true, kind: 'child' },
  { no: 12, name: '压墙筋', value: '2⌽12', check: true, kind: 'child' },
  { no: 13, name: '纵筋构造', value: '纵筋锚固', check: true, kind: 'child' },
  { no: 14, name: '水平钢筋拐角增加搭接', value: '否', kind: 'child' },
  { no: 15, name: '计算设置', value: '按默认计算设置计算', kind: 'child' },
  { no: 16, name: '节点设置', value: '按默认节点设置计算', kind: 'child' },
  { no: 17, name: '搭接设置', value: '按默认搭接设置计算', kind: 'child' },
  { no: 18, name: '起点顶标高(m)', value: '0', check: true, kind: 'child' },
  { no: 19, name: '终点顶标高(m)', value: '0', check: true, kind: 'child' },
  { no: 20, name: '起点底标高(m)', value: '基础底标高', check: true, kind: 'child' },
  { no: 21, name: '终点底标高(m)', value: '基础底标高', check: true, kind: 'child' },
  { no: 22, name: '锚固搭接', kind: 'closed' },
  { no: 37, name: '显示样式', kind: 'closed' },
]
const ACTIVE = 18
const LAST_CHILD = 21

const TD = 'border-b border-r border-[#c0c0c0] p-0'

function NameCell({ row }: { row: Prop }) {
  if (row.kind === 'child') {
    return (
      <div className="flex h-[18px] items-center pl-2">
        <span className={clsx('w-px self-start bg-[#b8b8b8]', row.no === LAST_CHILD ? 'h-[9px]' : 'h-[18px]')} />
        <span className="mr-[5px] h-px w-4 bg-[#b8b8b8]" />
        <span><Cell text={row.name} /></span>
      </div>
    )
  }
  if (row.kind === 'open' || row.kind === 'closed') {
    return (
      <div className="flex h-[18px] items-center pl-0.5 text-[#808080]">
        <button
          aria-label={row.kind === 'open' ? '折叠' : '展开'}
          className="mr-[5px] flex size-[13px] items-center justify-center border border-[#b0b0b0] bg-white"
        >
          <svg viewBox="0 0 7 7" className="size-[7px]" stroke="#000" aria-hidden="true">
            <path d={row.kind === 'open' ? 'M0 3.500h7' : 'M0 3.500h7M3.500 0v7'} />
          </svg>
        </button>
        {row.name}
      </div>
    )
  }
  return (
    <div className={clsx('h-[18px] pl-5 pt-px', row.kind === 'key' && 'text-[#0000ff]')}>
      <Cell text={row.name} />
    </div>
  )
}

function PropertyGrid() {
  return (
    <table className="w-[369px] table-fixed border-separate border-spacing-0 leading-4">
      <colgroup>
        <col className="w-[21px]" />
        <col className="w-[191px]" />
        <col className="w-[126px]" />
        <col className="w-[31px]" />
      </colgroup>
      <thead>
        <tr className="h-[22px] bg-linear-to-b from-[#fbfbfb] to-[#ececec]">
          <th className={TD} aria-label="序号" />
          <th className={clsx(TD, 'font-normal')}>属性名称</th>
          <th className={clsx(TD, 'bg-linear-to-b from-[#fad9a0] to-[#f0c060] font-normal text-[#600060]')}>属性值</th>
          <th className={clsx(TD, 'font-normal')}>附加</th>
        </tr>
      </thead>
      <tbody>
        {PROPS.map((row) => {
          const active = row.no === ACTIVE
          return (
            <tr key={row.no}>
              <td className={clsx(TD, active ? 'bg-[#ffd58a] text-[#600060]' : 'bg-[#f5f5f5]')}>
                <div className="h-[18px] text-center"><Cell text={String(row.no)} /></div>
              </td>
              <td className={clsx(TD, active && 'bg-[#0078d7] text-white')}>
                <NameCell row={row} />
              </td>
              <td className={clsx(TD, active && 'bg-[#d9eaf8]')}>
                <div className="h-[18px] whitespace-nowrap pl-0.5">{row.value && <Cell text={row.value} />}</div>
              </td>
              <td className={TD}>
                {row.check && (
                  <input
                    type="checkbox"
                    aria-label={`附加 ${row.name}`}
                    className="mx-auto block size-[13px] appearance-none border border-[#333] bg-white"
                  />
                )}
              </td>
            </tr>
          )
        })}
      </tbody>
    </table>
  )
}

function PropertyEditor() {
  return (
    <section className="relative ml-[3px] mr-px flex min-w-0 flex-1 flex-col border border-t-0 border-[#dcdcdc] bg-white">
      <div className="flex h-[22px] shrink-0">
        <h2 className="w-[63px] border-r border-t border-[#d4d4d4] pl-1.5 leading-[20px]">属性编辑</h2>
        <div className="flex-1 border-b border-[#d4d4d4]" />
      </div>
      <div className="mb-[3px] ml-[3px] mr-0.5 mt-[3px] min-h-0 flex-1 border border-[#a0a0a8] pl-px pt-px">
        <PropertyGrid />
      </div>
      <svg viewBox="0 0 320 58" className="pointer-events-none absolute left-[-16px] top-[356px] h-[58px] w-80" fill="none" aria-hidden="true">
        <ellipse cx="160" cy="29" rx="156" ry="25" stroke="#ff0000" strokeWidth="8" />
      </svg>
    </section>
  )
}

// ─── status bar and taskbar ─────────────────────────────────────────────────

function StatusBar() {
  const box = 'flex items-center overflow-hidden whitespace-nowrap border border-[#d4d4d4] bg-linear-to-b from-[#fafafa] to-[#efefef] pl-px'
  return (
    <footer className="flex h-5 shrink-0 gap-0.5">
      <div className={clsx(box, 'w-[148px]')} />
      <div className={clsx(box, 'w-[78px]')}><span><Cell text="层高:3.55m" /></span></div>
      <div className={clsx(box, 'w-[98px]')}><span><Cell text="底标高:-3.58m" /></span></div>
      <div className={clsx(box, 'w-12')}><span><Cell text="0" /></span></div>
      <div className={clsx(box, 'flex-1')}>缺省为当前楼层顶标高</div>
      <div className={clsx(box, 'w-[70px]')}><span><Cell text="314.8 FPS" /></span></div>
    </footer>
  )
}

const APPS: { name: string; art: ReactNode; on?: boolean; active?: boolean }[] = [
  {
    name: '任务视图',
    art: <path d="M7.500 6.500h9v11h-9zM5 7.500H2.500v9H5M19 7.500h2.500v9H19" fill="none" stroke="#fff" strokeWidth="1.300" />,
  },
  {
    name: '浏览器',
    art: (
      <g fill="#e8e8e8" stroke="#000b0e" strokeWidth=".8">
        <path d="M11.500 12C5 12.500 1 11 1.500 7 2 3 5 1 8.500 1.500c4 .5 5 5 3 10.500z" />
        <path d="M12 11.500C10 5 11.500 1.500 16 1c4 0 6.500 3 6 6.500-.5 4-5 5-10 4z" />
        <path d="M12.500 12c6.500-.5 10.500 1 10 5-.5 4-3.500 6-7 5.500-4-.5-5-5-3-10.500z" />
        <path d="M12 12.500c2 6.500.5 10-4 10.500-4 0-6.500-3-6-6.500.5-4 5-5 10-4z" />
      </g>
    ),
  },
  {
    name: '旋风',
    art: (
      <path d="M21 3c-8-1.500-17 1-17 10 0 6 5 9 9 9 5 0 8-4 7-8-1-3-5-5-8-3-3 1.500-2 6 1 6 2 0 3-1 3-2.500M20 5c-6-1-12 1-12 8 0 4 3 6 6 5.500" fill="none" stroke="#c8c8c8" strokeWidth="1.300" />
    ),
  },
  {
    name: 'Edge',
    art: <path d="M2 11C3 4 8 1.500 12.500 1.500 19 1.500 22 6 22 11v3H8.500c0 5 7.500 6 12.500 3.500v4C13 25 4 22.500 4 15c0-4 3-7 6-8-1 1-1.500 2-1.500 3.500h7.500C16 5 8 5 2 11z" fill="#0a78d8" />,
  },
  {
    name: '应用商店',
    art: (
      <>
        <path d="M1 6h22v16q0 1-1 1H2q-1 0-1-1z" fill="#fff" />
        <path d="M8 8V4c0-4 7-4 7 0v4" fill="none" stroke="#ccc" strokeWidth="1.200" />
        <path d="M7 9h4.500v4.500H7z" fill="#f25022" />
        <path d="M12.500 9H17v4.500h-4.500z" fill="#7fba00" />
        <path d="M7 14.500h4.500V19H7z" fill="#00a4ef" />
        <path d="M12.500 14.500H17V19h-4.500z" fill="#ffb900" />
      </>
    ),
  },
  {
    name: '文件资源管理器',
    art: (
      <>
        <path d="M2 3h8l1.500 2H22v16H2z" fill="#ffe08a" />
        <path d="M2 3h8v2H2z" fill="#f4b838" />
        <path d="M5 21v-6q0-1.500 1.500-1.500h11q1.500 0 1.500 1.500v6h-3v-4H8v4z" fill="#38a8e0" />
      </>
    ),
  },
  {
    name: 'Internet Explorer',
    art: (
      <>
        <path d="M4 13C4 7 8 4 13 4s9 4 8.500 10H9c0 5 7 5.500 8 2h4c-1 5-5 6.500-9 6-5-.5-8-4-8-9zM9 11h7.500C16 6.500 9 6.500 9 11z" fill="#48a8ec" />
        <path d="M3 22C-1 21 4 10 12 5c6-4 11-5 10.500-1C20 1 10 7 6 13c-3 5-4 7-3 9z" fill="#f8c830" />
      </>
    ),
  },
  {
    name: '广联达',
    on: true,
    art: (
      <>
        <path d="M23 2C12-1 1 3 1 13c0 6 5 10 10 10 6 0 11-4 11-9 0-4-5-6-8-4 2 1 2 3 1 4-2 3-8 2-8-3C7 6 15 4 23 2z" fill="#189cf0" />
        <path d="M4 17c3 5 12 6 16 0-1 4-5 6-9 6-3 0-6-2-7-6z" fill="#0c6cc8" />
      </>
    ),
  },
  {
    name: '360浏览器',
    on: true,
    art: (
      <>
        <circle cx="12" cy="12.500" r="10" fill="#58c030" stroke="#d8f8c8" />
        <path d="M6.500 13h10.500c0-7-10-7-10 0 0 6 8 6 9.500 2.500" fill="none" stroke="#fff" strokeWidth="2.800" />
        <path d="M2 18C4 9 13 2 22 1" fill="none" stroke="#48a828" strokeWidth="1.500" />
      </>
    ),
  },
  {
    name: '记事',
    on: true,
    art: (
      <>
        <rect x="1" y="1" width="22" height="22" rx="2" fill="#f89820" />
        <path d="M4 5l13-1 1 15H4z" fill="#fff8e8" />
        <path d="M6 8h8M6 11h7M6 14h5M6 17h5" stroke="#c89858" />
        <path d="M21 3l-9 11-1 4 4-2 7-11z" fill="#8c4818" stroke="#fff" strokeWidth=".6" />
      </>
    ),
  },
  {
    name: '广联达BIM钢筋算量',
    on: true,
    active: true,
    art: (
      <>
        <rect x="1" y="1" width="22" height="22" rx="4" fill="#0a90f4" />
        <path d="M15 5.500q-3-1.500-3 1.500v9c0 4-4.500 4-4.500.5M4.500 10q-.5 3 2 3h11q2.500 0 2-3" fill="none" stroke="#fff" strokeWidth="2" />
      </>
    ),
  },
]

function Taskbar() {
  return (
    <footer className="flex h-10 shrink-0 bg-[#000b0e] text-white">
      <button aria-label="开始" className="flex w-12 shrink-0 items-center justify-center bg-black">
        <svg viewBox="0 0 16 16" className="size-4" fill="#fff" aria-hidden="true">
          <path d="M0 2.200l6.500-.9v6.200H0zM7.300 1.200L16 0v7.500H7.300zM0 8.300h6.500v6.300L0 13.700zM7.300 8.300H16V16l-8.700-1.200z" />
        </svg>
      </button>
      <div className="flex w-[344px] shrink-0 items-center bg-[#333] pl-[9px]">
        <svg viewBox="0 0 22 22" className="size-[22px]" fill="none" aria-hidden="true">
          <circle cx="11" cy="11" r="9" stroke="#fff" strokeWidth="2.500" />
        </svg>
        <input
          type="text"
          aria-label="搜索"
          placeholder="在这里输入你要搜索的内容"
          className="ml-[5px] w-[260px] bg-transparent text-[14px] placeholder:text-[#999]"
        />
        <svg viewBox="0 0 12 18" className="ml-auto mr-[15px] h-[18px] w-3" fill="none" stroke="#aaa" aria-hidden="true">
          <rect x="3.500" y="1" width="5" height="10" rx="1" />
          <path d="M1 8v5.500h10V8M6 13.500V17M3 17h6" />
        </svg>
      </div>
      <div className="flex">
        {APPS.map((app) => (
          <button
            key={app.name}
            aria-label={app.name}
            className={clsx(
              'flex items-center justify-center',
              app.active ? 'w-12 border-y-2 border-b-[#76b9ed] border-t-[#343f42] bg-[#343f42]' : 'w-[50px] first:w-[46px]',
            )}
          >
            <span className={clsx('flex h-10 w-10 items-center justify-center', app.on && !app.active && 'border-y-2 border-b-[#76b9ed] border-t-transparent')}>
              <svg viewBox="0 0 24 24" className="size-6" aria-hidden="true">{app.art}</svg>
            </span>
          </button>
        ))}
      </div>
      <div className="ml-auto flex items-center">
        <svg viewBox="0 0 12 8" className="h-2 w-3" fill="none" stroke="#fff" strokeWidth="1.300" aria-hidden="true">
          <path d="M1 7l5-5 5 5" />
        </svg>
        <svg viewBox="0 0 18 16" className="ml-2.5 h-4 w-[18px]" fill="none" stroke="#fff" aria-hidden="true">
          <path d="M6.500 5.500h9v7h-9zM16.500 7.500v3M1.500 3v3.500h4V3M2.500 1v2M4.500 1v2M3.500 6.500v5h3" />
          <path d="M8 7h6v4H8z" fill="#fff" />
        </svg>
        <svg viewBox="0 0 16 16" className="ml-2 size-4" fill="none" stroke="#fff" aria-hidden="true">
          <path d="M2 14C3 7 7 3 14 2M5 14c1-5 4-8 9-9M8 14c0-3 3-6 6-6" stroke="#aaa" />
          <path d="M11 14c0-2 1-3 3-3v3z" fill="#fff" />
        </svg>
        <svg viewBox="0 0 18 16" className="ml-1.5 h-4 w-[18px]" fill="none" stroke="#fff" strokeWidth="1.200" aria-hidden="true">
          <path d="M1 5.500h3L8 2v12l-4-3.500H1zM10.500 6q1.500 2 0 4M12.500 4q3 4 0 8M14.500 2.500q4 5.500 0 11" />
        </svg>
        <svg viewBox="0 0 24 14" className="ml-2 h-3.5 w-6" fill="none" stroke="#fff" aria-hidden="true">
          <rect x="1" y=".5" width="22" height="13" />
          <path d="M3 3.500h18M3 6.500h18" strokeDasharray="1.500 1" strokeWidth="1.400" />
          <path d="M6 10.500h12" />
        </svg>
        <span className="ml-2 w-7 text-[13px]">英</span>
        <SogouLogo className="size-4" />
        <div className="ml-2 w-[77px] text-center text-[12px] leading-[18px]">
          <div>10:52</div>
          <div>2017/11/2</div>
        </div>
        <button aria-label="通知" className="flex h-10 w-[51px] items-center border-r border-[#444] bg-black pl-2.5">
          <svg viewBox="0 0 26 26" className="size-[26px]" aria-hidden="true">
            <path d="M2 3h16v12H9l-4 4v-4H2z" fill="#fff" />
            <path d="M5 6.500h10M5 9.500h10M5 12.500h6" stroke="#000" />
            <circle cx="17.500" cy="17.500" r="7.500" fill="#333" stroke="#888" />
            <text x="17.500" y="21.500" textAnchor="middle" fontSize="11" fontWeight="bold" fill="#fff">2</text>
          </svg>
        </button>
      </div>
    </footer>
  )
}

export default function App() {
  return (
    <div className="flex h-screen min-h-[600px] flex-col overflow-hidden bg-[#f0f0f0] font-['Noto_Sans','Noto_Sans_CJK_SC',sans-serif] text-[12px] leading-4 text-black">
      <TitleBar />
      <MenuBar />
      <MainToolbar />
      <main className="mt-0.5 flex min-h-0 flex-1">
        <ModuleNav />
        <div className="ml-[5px] flex min-w-0 flex-1 flex-col">
          <PartToolbar />
          <div className="flex min-h-0 flex-1">
            <PartList />
            <div className="flex min-w-0 flex-1 pt-0.5">
              <PropertyEditor />
            </div>
          </div>
        </div>
      </main>
      <div className="h-[3px] shrink-0" />
      <StatusBar />
      <Taskbar />
    </div>
  )
}
